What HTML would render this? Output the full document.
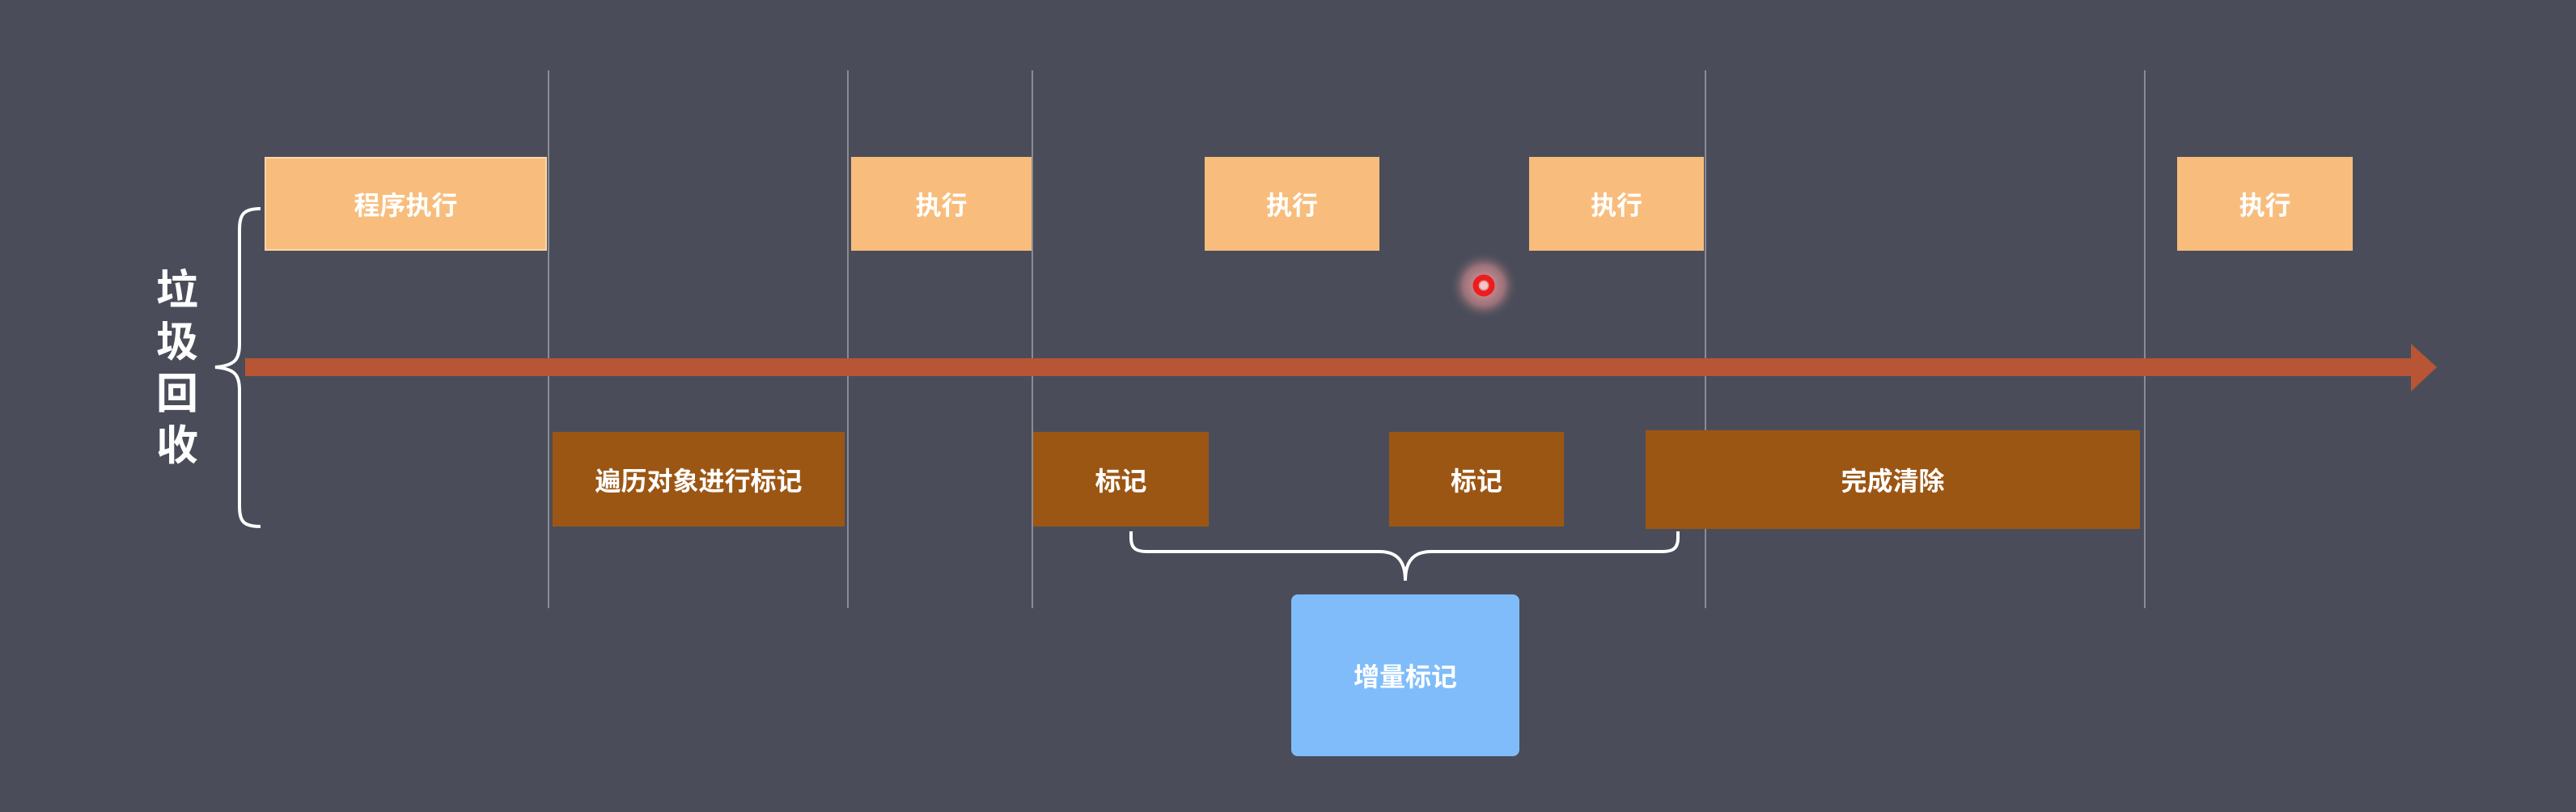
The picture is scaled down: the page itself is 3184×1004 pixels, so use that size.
<!DOCTYPE html>
<html><head><meta charset="utf-8"><style>
html,body{margin:0;padding:0;width:3184px;height:1004px;background:#4a4d59;overflow:hidden}
.b{position:absolute;display:flex;align-items:center;justify-content:center;color:#fff;font-family:"Liberation Sans","Noto Sans CJK SC",sans-serif;font-weight:bold;font-size:32px}
.l{background:#f8bd7c}
.d{background:#9c5614}
.v{position:absolute;top:87px;height:665px;width:2px;background:#8a8c94}
</style></head><body>
<div class="v" style="left:677px"></div>
<div class="v" style="left:1047px"></div>
<div class="v" style="left:1275px"></div>
<div class="v" style="left:2107px"></div>
<div class="v" style="left:2650px"></div>

<div class="b l" style="left:327px;top:194px;width:349px;height:116px;box-shadow:0 0 0 2px #fbd6a8 inset">程序执行</div>
<div class="b l" style="left:1052px;top:194px;width:223px;height:116px">执行</div>
<div class="b l" style="left:1489px;top:194px;width:216px;height:116px">执行</div>
<div class="b l" style="left:1890px;top:194px;width:216px;height:116px">执行</div>
<div class="b l" style="left:2691px;top:194px;width:217px;height:116px">执行</div>

<div class="b d" style="left:683px;top:534px;width:361px;height:117px">遍历对象进行标记</div>
<div class="b d" style="left:1277px;top:534px;width:217px;height:117px">标记</div>
<div class="b d" style="left:1717px;top:534px;width:216px;height:117px">标记</div>
<div class="b d" style="left:2034px;top:532px;width:611px;height:122px">完成清除</div>

<div class="b" style="left:1596px;top:735px;width:282px;height:200px;background:#7fbcf9;border-radius:8px">增量标记</div>

<svg width="3184" height="1004" style="position:absolute;left:0;top:0" xmlns="http://www.w3.org/2000/svg">
<defs><radialGradient id="g"><stop offset="0" stop-color="#f3a8a8" stop-opacity="0.95"/><stop offset="0.6" stop-color="#d08a90" stop-opacity="0.6"/><stop offset="1" stop-color="#4a4d59" stop-opacity="0"/></radialGradient></defs>
<rect x="303" y="443" width="2682" height="22" fill="#b85535"/>
<polygon points="2980,425 3012,454 2980,484" fill="#b85535"/>
<path d="M322,258 C300,258 296,266 296,285 L296,425 C296,445 290,452 266,454 C290,456 296,463 296,483 L296,625 C296,644 300,651 322,651" fill="none" stroke="#fff" stroke-width="4"/>
<path d="M1398,657 L1398,665 C1398,678 1404,682 1418,682 L1705,682 C1725,682 1737,692 1737,718 C1737,692 1749,682 1769,682 L2054,682 C2068,682 2074,678 2074,665 L2074,657" fill="none" stroke="#fff" stroke-width="4"/>
<circle cx="1834" cy="353" r="42" fill="url(#g)"/>
<circle cx="1834" cy="353" r="10" fill="none" stroke="#ee1c1c" stroke-width="7"/>
<circle cx="1834" cy="353" r="5" fill="#f6c4c4"/>
</svg>
<div class="b" style="left:184px;top:328px;width:70px;flex-direction:column;font-size:52px;line-height:64px">垃<br>圾<br>回<br>收</div>
</body></html>
